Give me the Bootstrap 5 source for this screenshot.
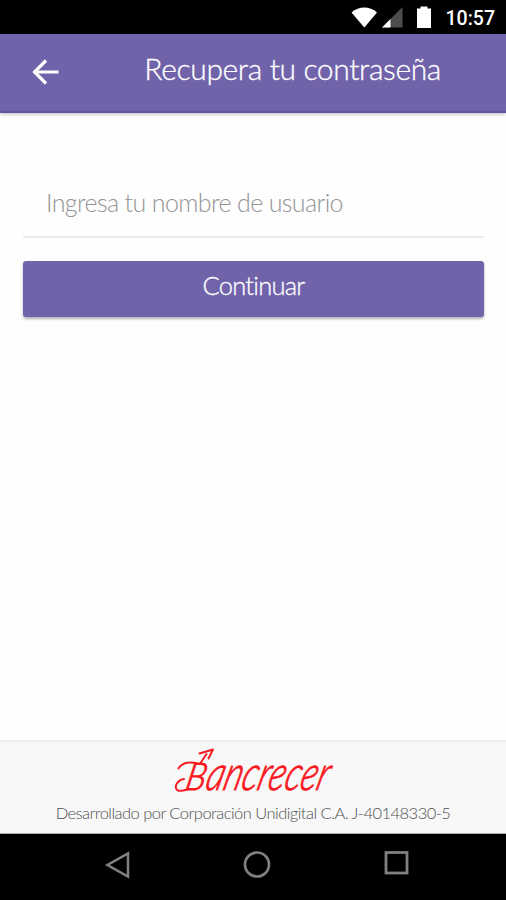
<!DOCTYPE html>
<html lang="es">
<head>
<meta charset="utf-8">
<meta name="viewport" content="width=device-width, initial-scale=1">
<title>Recupera tu contraseña</title>
<link href="https://cdn.jsdelivr.net/npm/bootstrap@5.3.0/dist/css/bootstrap.min.css" rel="stylesheet">
<style>
body{font-family:Lato,sans-serif;font-weight:300;overflow:hidden;background:#fefefe}
.status-bar{height:34px;background:#000;color:#fff;padding:4px 11px 0 0;font:500 19.5px/30px Roboto,sans-serif}
.app-bar{height:79px;background:#7063aa;border-bottom:2px solid #6054a0;box-shadow:0 1px 4px rgba(0,0,0,.28);padding:0 65px 9px 32px;color:#fff}
.back-button{margin-top:8px;line-height:0}
.screen-title{font-size:30px;line-height:34px;font-weight:300;letter-spacing:-.38px;white-space:nowrap;-webkit-text-stroke:.3px #fff}
.form-area{padding:66px 22px 0 23px}
.user-field{height:59px;padding:0 23px 11px;border:0;border-bottom:2px solid #ebebeb;border-radius:0;background:transparent;font-size:25px;letter-spacing:-.62px;font-weight:300;color:#555}
.user-field:focus{box-shadow:none;background:transparent}
.user-field::placeholder{color:#949494;opacity:1}
.continue-button{height:56px;margin-top:23px;border:0;border-radius:3px;background:#7063aa;color:#fff;font-size:25.500px;line-height:30px;font-weight:300;letter-spacing:-.75px;padding:0 0 8px;box-shadow:0 2px 3px rgba(0,0,0,.3);-webkit-text-stroke:.3px #fff}
.continue-button:hover{background:#63569c;color:#fff}
.brand-footer{height:94px;background:#f8f8f8;border-top:2px solid #efefef;border-bottom:1px solid #aaa;padding-top:3px}
.brand-logo{display:block;overflow:visible}
.legal{font-size:16.500px;line-height:20px;letter-spacing:-.53px;color:#505050;white-space:nowrap;margin-top:4px}
.system-nav{height:66px;background:#000;padding:0 96px 4px 104px}
</style>
</head>
<body class="vh-100 d-flex flex-column">
<div class="status-bar d-flex justify-content-end align-items-center">
  <svg width="88" height="28" viewBox="351 5 88 28" aria-hidden="true">
    <path d="M352.500 12.500C360 5.800 370.500 5.800 378 12.500L365.300 27.500Z" fill="#fff"/>
    <path d="M403.500 7V27.500H383Z" fill="#4d4d4d"/>
    <path d="M391.500 19V27.500H383Z" fill="#fff"/>
    <path d="M421.500 6.500h7v2h3.500v19.500h-14V8.500h3.500Z" fill="#fff"/>
  </svg>
  <span class="clock ms-2">10:57</span>
</div>
<header class="app-bar d-flex align-items-center justify-content-between">
  <a class="back-button" href="#" aria-label="Volver">
    <svg width="28" height="28" viewBox="0 0 28 28" fill="none" stroke="#fff" stroke-width="3.200"><path d="M14 2.500 2.500 14 14 25.500M3 14H26.500"/></svg>
  </a>
  <h1 class="screen-title mb-0">Recupera tu contraseña</h1>
</header>
<main class="form-area flex-grow-1">
  <input class="form-control user-field" type="text" placeholder="Ingresa tu nombre de usuario" aria-label="Nombre de usuario">
  <button class="btn continue-button w-100" type="button">Continuar</button>
</main>
<footer class="brand-footer d-flex flex-column align-items-center">
  <svg class="brand-logo" width="180" height="54" viewBox="163 745 180 54">
    <g fill="none" stroke="#f8191f" stroke-width="1.900" stroke-linecap="round" stroke-linejoin="round">
      <path d="M200.500 763 206.500 754M199.500 753.500 213 749.500 208.500 758.500"/>
      <path d="M196 763C187 761.500 181 764 178.500 768.500M184 779C177 780 173 788 178 790.500Q181 791.500 187 789.500"/>
    </g>
    <g fill="#f8191f" stroke="#f8191f" stroke-width="1" font-family="Lato, sans-serif" font-style="italic" font-weight="300">
      <text transform="translate(184 790) skewX(-12)" font-size="38" textLength="20" lengthAdjust="spacingAndGlyphs">B</text>
      <text transform="translate(204 790) skewX(-15)" font-size="48" textLength="122" lengthAdjust="spacingAndGlyphs">ancrecer</text>
    </g>
  </svg>
  <div class="legal">Desarrollado por Corporación Unidigital C.A. J-40148330-5</div>
</footer>
<nav class="system-nav d-flex align-items-center justify-content-between" aria-label="Sistema">
  <svg width="27" height="30" viewBox="0 0 27 30" fill="none" stroke="#808080" stroke-width="2.500"><path d="M24 3.500V26.500L3.500 15Z"/></svg>
  <svg width="30" height="30" viewBox="0 0 30 30" fill="none" stroke="#808080" stroke-width="2.700"><circle cx="15" cy="14.500" r="12"/></svg>
  <svg width="28" height="30" viewBox="0 0 28 30" fill="none" stroke="#808080" stroke-width="2.800"><rect x="4" y="2.500" width="21" height="20.500"/></svg>
</nav>
<script src="https://cdn.jsdelivr.net/npm/bootstrap@5.3.0/dist/js/bootstrap.bundle.min.js"></script>
</body>
</html>
